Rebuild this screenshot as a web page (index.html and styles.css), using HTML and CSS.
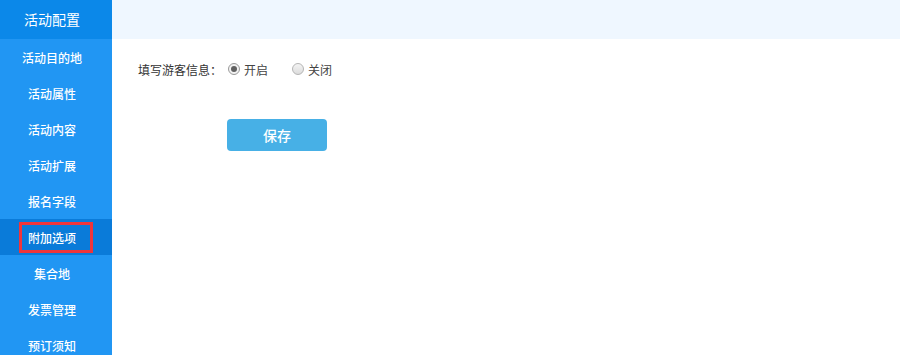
FILE: index.html
```html
<!DOCTYPE html>
<html lang="zh-CN">
<head>
  <meta charset="UTF-8" />
  <title>附加选项</title>
  <link rel="stylesheet" href="styles.css">
</head>
<body>
  <div class="layout">
    <div class="sidebar">
      <div class="side-title">活动配置</div>
      <ul class="menu">
        <li>活动目的地</li>
        <li>活动属性</li>
        <li>活动内容</li>
        <li>活动扩展</li>
        <li>报名字段</li>
        <li class="active"><span class="mark">附加选项</span></li>
        <li>集合地</li>
        <li>发票管理</li>
        <li>预订须知</li>
      </ul>
    </div>

    <div class="main">
      <div class="topbar"></div>
      <div class="content">
        <div class="form-row">
          <span class="label">填写游客信息：</span>
          <label class="radio"><span class="dot checked"></span>开启</label>
          <label class="radio"><span class="dot"></span>关闭</label>
        </div>
        <button class="save-btn">保存</button>
      </div>
    </div>
  </div>
</body>
</html>
```

FILE: styles.css
```css
html, body {
  margin: 0;
  padding: 0;
  height: 100%;
  font-family: "Noto Sans CJK SC", "Liberation Sans", sans-serif;
  background: #fff;
  overflow: hidden;
}

.layout {
  display: flex;
  height: 100%;
}

.sidebar {
  width: 112px;
  flex-shrink: 0;
  background: #2196f3;
}

.side-title {
  height: 39px;
  line-height: 38px;
  padding-right: 8px;
  background: #0b88e9;
  color: #fff;
  font-size: 14px;
  text-align: center;
}

.menu {
  list-style: none;
  margin: 0;
  padding: 0;
}

.menu li {
  height: 36px;
  padding-right: 8px;
  display: flex;
  align-items: center;
  justify-content: center;
  color: #fff;
  font-size: 12px;
  font-weight: 500;
}

.menu li.active {
  padding-right: 0;
  background: #0a7bd9;
}

.mark {
  display: flex;
  align-items: center;
  justify-content: center;
  width: 60px;
  height: 25px;
  padding-right: 8px;
  border: 3px solid #f0353a;
}

.main {
  flex: 1;
}

.topbar {
  height: 39px;
  background: #eff7ff;
}

.content {
  padding: 20px 0 0 26px;
}

.form-row {
  display: flex;
  align-items: center;
  height: 20px;
  font-size: 12px;
  color: #333;
}

.label {
  width: 90px;
}

.radio {
  display: flex;
  align-items: center;
  margin-right: 24px;
  color: #444;
}

.dot {
  width: 10px;
  height: 10px;
  border: 1px solid #b5b5b5;
  border-radius: 50%;
  background: linear-gradient(#f4f4f4, #dcdcdc);
  margin-right: 4px;
  position: relative;
}

.dot.checked {
  border-color: #9a9a9a;
  background: #f2f2f2;
}

.dot.checked::after {
  content: "";
  position: absolute;
  left: 2px;
  top: 2px;
  width: 6px;
  height: 6px;
  border-radius: 50%;
  background: #606060;
}

.save-btn {
  display: block;
  margin: 40px 0 0 89px;
  width: 100px;
  height: 32px;
  border: none;
  border-radius: 4px;
  background: #47b0e6;
  color: #fff;
  font-family: inherit;
  font-size: 14px;
  font-weight: 500;
  cursor: pointer;
}
```
